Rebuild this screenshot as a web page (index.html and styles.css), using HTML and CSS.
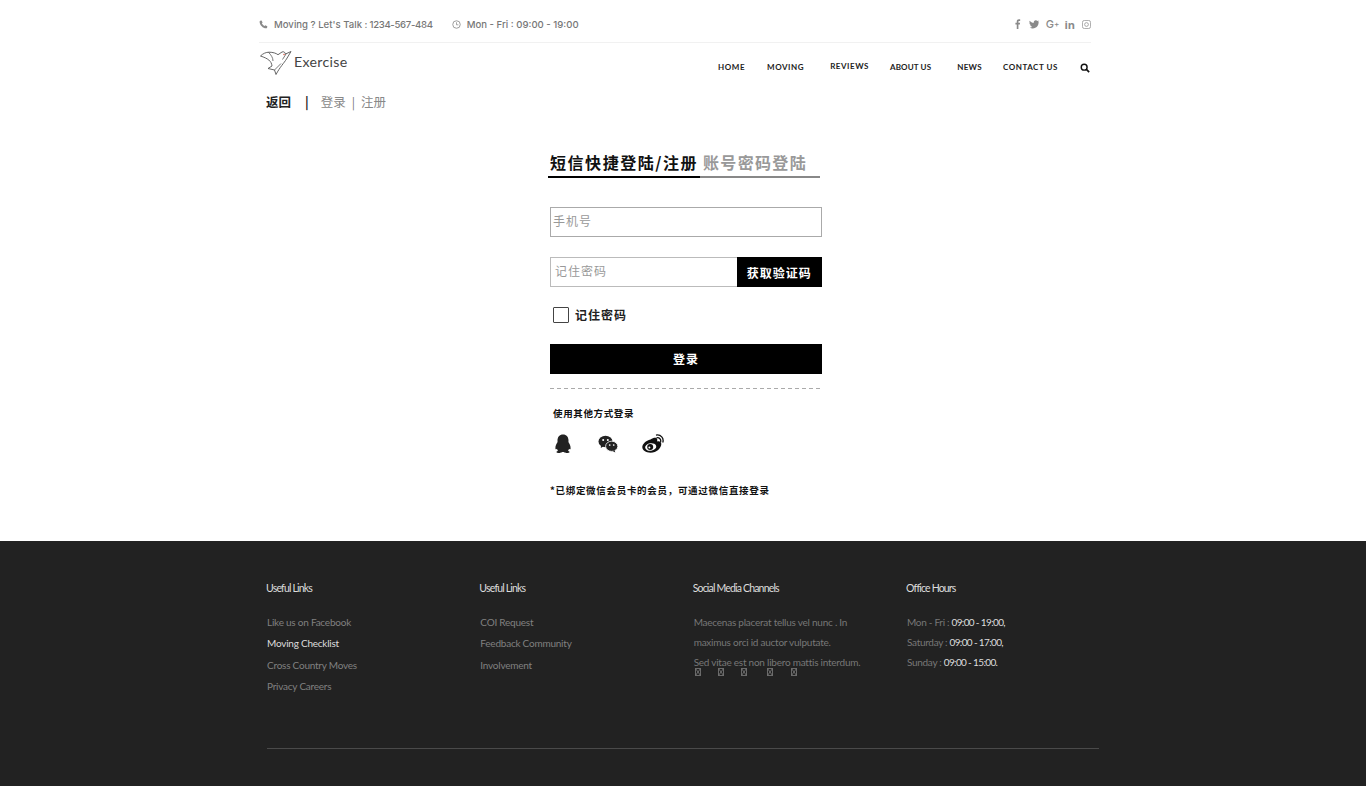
FILE: index.html
```html
<!DOCTYPE html>
<html lang="zh">
<head>
<meta charset="utf-8">
<title>Exercise</title>
<link rel="stylesheet" href="styles.css">
</head>
<body>
<header class="header">
  <div class="topbar">
    <div class="contact">
      <span class="contact-item">
        <svg class="ti" viewBox="0 0 12 12"><path d="M1.500 1 3.400.700l1.400 2.700-1 1c.6 1.500 2 3 3.600 3.600l1-1 2.700 1.400-.3 1.900c-.2.500-.7.7-1.300.7C5 10.700 1.300 7 .8 2.500c0-.7.200-1.300.7-1.500z" fill="#8a8a8a"/></svg>
        <span>Moving ? Let's Talk :</span><span class="phone">1234-567-484</span>
      </span>
      <span class="contact-item">
        <svg class="ti" viewBox="0 0 12 12"><circle cx="6" cy="6" r="5" fill="none" stroke="#8a8a8a" stroke-width="1.100"/><path d="M6 3V6.400H8.500" fill="none" stroke="#8a8a8a" stroke-width="1"/></svg>
        <span>Mon - Fri : 09:00 - 19:00</span>
      </span>
    </div>
    <div class="social">
      <svg class="si si-f" viewBox="0 0 7 12"><path d="M2 12V6.600H.4V4.500H2V3C2 1.200 3 .3 4.600.3c.7 0 1.300.1 1.500.1v1.900H5c-.8 0-1 .4-1 1v1.200h2l-.3 2.100H4V12z" fill="#8a8a8a"/></svg>
      <svg class="si si-t" viewBox="0 0 12 10"><path d="M12 1.300c-.4.200-.9.300-1.400.4.500-.3.900-.8 1.100-1.400-.5.300-1 .5-1.600.6C9.600.4 9 0 8.200 0 6.600 0 5.400 1.500 5.800 3 3.700 2.900 1.900 1.900.8.400.2 1.500.500 2.900 1.600 3.600c-.4 0-.8-.1-1.100-.3 0 1.200.8 2.200 2 2.500-.4.100-.8.100-1.100 0 .3 1 1.200 1.700 2.300 1.700C3.600 8.300 2.200 8.800.8 8.600 1.900 9.300 3.200 9.700 4.500 9.700c4.600 0 7.200-3.900 7-7.400.2-.3.500-.6.500-1z" fill="#8a8a8a"/></svg>
      <span class="gplus">G<span class="plus">+</span></span>
      <span class="linkedin">in</span>
      <svg class="si si-i" viewBox="0 0 10 10"><rect x=".5" y=".5" width="9" height="9" rx="2.200" fill="none" stroke="#8a8a8a" stroke-width=".8"/><circle cx="5" cy="5" r="2.100" fill="none" stroke="#8a8a8a" stroke-width=".8"/></svg>
    </div>
  </div>
  <div class="navrow">
    <a class="logo">
      <svg class="logo-mark" viewBox="0 0 32 26">
        <path d="M.5 6C3 3.500 6 2.200 9 2.200c4 0 7 1 9 2.500L22 2c2-.8 3 .5 3.500 2L31 1.500 26.500 9C24 13 20 17 16 24.500L14.500 20 8 18.500 12 16C11.500 11 8 8.500.5 6z" fill="none" stroke="#555" stroke-width=".9"/>
        <path d="M8.500 2.300C11 5 13 7.500 13 11M14.500 20 21 13.500M26 4 22.500 9.500" fill="none" stroke="#555" stroke-width=".8"/>
        <circle cx="24" cy="4.500" r=".8" fill="#e0604c"/>
      </svg>
      <span class="logo-text">Exercise</span>
    </a>
    <nav class="nav">
      <a class="nav-link n1">HOME</a>
      <a class="nav-link n2">MOVING</a>
      <a class="nav-link n3 raised">REVIEWS</a>
      <a class="nav-link n4">ABOUT US</a>
      <a class="nav-link n5">NEWS</a>
      <a class="nav-link n6">CONTACT US</a>
      <svg class="search" viewBox="0 0 12 12"><circle cx="5" cy="5" r="3.500" fill="none" stroke="#111" stroke-width="1.700"/><path d="M7.700 7.700 11 11" stroke="#111" stroke-width="2"/></svg>
    </nav>
  </div>
  <div class="crumbs">
    <a class="back">返回</a>
    <span class="sep">|</span>
    <a class="crumb">登录</a>
    <span class="crumb-sep">|</span>
    <a class="crumb">注册</a>
  </div>
</header>

<main class="login">
  <div class="tabs">
    <a class="tab active">短信快捷登陆/注册</a>
    <a class="tab">账号密码登陆</a>
  </div>
  <div class="field">手机号</div>
  <div class="code-row">
    <div class="field code-field">记住密码</div>
    <a class="code-btn">获取验证码</a>
  </div>
  <label class="remember"><span class="box"></span>记住密码</label>
  <a class="submit">登录</a>
  <div class="dashed"></div>
  <p class="other">使用其他方式登录</p>
  <div class="providers">
    <svg class="provider" viewBox="0 0 20 20"><path d="M10 .500c3.500 0 5.500 2.600 5.500 6 0 .7 0 1.200-.1 1.500.9 1.300 2.400 3.900 2.200 6.400-.1 1-.5 1.300-1.600.3-.2.900-.6 1.600-1 2.100 1.300.5 1.700 1 1.500 1.500-.2.600-2 .8-3.500.6-1.200-.2-1.800-.6-2.300-.8h-1.400c-.5.200-1.100.6-2.300.8-1.500.2-3.300 0-3.500-.6-.2-.5.200-1 1.500-1.500-.4-.5-.8-1.200-1-2.100-1.100 1-1.500.7-1.600-.3-.2-2.500 1.300-5.100 2.200-6.400-.1-.3-.1-.8-.1-1.500 0-3.400 2-6 5.500-6z" fill="#222"/></svg>
    <svg class="provider" viewBox="0 0 20 20"><ellipse cx="7.500" cy="7.500" rx="7" ry="5.800" fill="#222"/><path d="M3 11 2.800 14 6 12z" fill="#222"/><circle cx="5.200" cy="6" r="1" fill="#fff"/><circle cx="9.800" cy="6" r="1" fill="#fff"/><ellipse cx="13.700" cy="12.300" rx="6.100" ry="5.100" fill="#222" stroke="#fff" stroke-width=".8"/><path d="M16.500 16 17.300 18.500 14.500 17z" fill="#222"/><circle cx="11.700" cy="11" r=".85" fill="#fff"/><circle cx="15.700" cy="11" r=".85" fill="#fff"/></svg>
    <svg class="provider weibo" viewBox="0 0 22 20"><path d="M8.500 5.500c3.500-2.300 6.500-2.300 6.800.2 0 .7-.2 1.200-.3 1.700 2.400-.6 4.300.3 4.300 2.500 0 4-4.700 8.800-10.700 8.800C3.800 18.700.3 16.400.3 13 .3 10.300 4 6.300 8.500 5.500z" fill="#111"/><ellipse cx="8.700" cy="13" rx="5.600" ry="3.700" fill="#fff" transform="rotate(-8 8.700 13)"/><circle cx="8.200" cy="13.100" r="3" fill="#111"/><circle cx="7.400" cy="13.500" r="1" fill="#fff"/><path d="M14.500 3.800c2.800-.7 5 1.900 4 4.400M14 1.100c4.800-1 8.300 3.300 6.700 7.500" fill="none" stroke="#111" stroke-width="1.300"/></svg>
  </div>
  <p class="note">*已绑定微信会员卡的会员，可通过微信直接登录</p>
</main>

<footer class="footer">
  <div class="columns">
    <section class="col">
      <h4 class="col-title">Useful Links</h4>
      <ul class="links">
        <li>Like us on Facebook</li>
        <li class="on">Moving Checklist</li>
        <li>Cross Country Moves</li>
        <li>Privacy Careers</li>
      </ul>
    </section>
    <section class="col">
      <h4 class="col-title">Useful Links</h4>
      <ul class="links">
        <li>COI Request</li>
        <li>Feedback Community</li>
        <li>Involvement</li>
      </ul>
    </section>
    <section class="col">
      <h4 class="col-title">Social Media Channels</h4>
      <p class="copy">Maecenas placerat tellus vel nunc . In<br>maximus orci id auctor vulputate.</p>
      <p class="copy">Sed vitae est non libero mattis interdum.</p>
      <div class="tofus">
        <svg class="tofu t1" viewBox="0 0 6 8"><path d="M.5.500h5v7h-5zM.5.500l5 7M5.500.500l-5 7" fill="none" stroke="#8a8a8a" stroke-width=".7"/></svg>
        <svg class="tofu t2" viewBox="0 0 6 8"><path d="M.5.500h5v7h-5zM.5.500l5 7M5.500.500l-5 7" fill="none" stroke="#8a8a8a" stroke-width=".7"/></svg>
        <svg class="tofu t3" viewBox="0 0 6 8"><path d="M.5.500h5v7h-5zM.5.500l5 7M5.500.500l-5 7" fill="none" stroke="#8a8a8a" stroke-width=".7"/></svg>
        <svg class="tofu t4" viewBox="0 0 6 8"><path d="M.5.500h5v7h-5zM.5.500l5 7M5.500.500l-5 7" fill="none" stroke="#8a8a8a" stroke-width=".7"/></svg>
        <svg class="tofu" viewBox="0 0 6 8"><path d="M.5.500h5v7h-5zM.5.500l5 7M5.500.500l-5 7" fill="none" stroke="#8a8a8a" stroke-width=".7"/></svg>
      </div>
    </section>
    <section class="col">
      <h4 class="col-title">Office Hours</h4>
      <p class="hours">Mon - Fri : <b>09:00 - 19:00,</b></p>
      <p class="hours">Saturday : <b>09:00 - 17:00,</b></p>
      <p class="hours">Sunday : <b>09:00 - 15:00.</b></p>
    </section>
  </div>
  <div class="rule"></div>
</footer>
</body>
</html>
```
FILE: styles.css
```css
* { box-sizing: border-box; }
html, body { margin: 0; padding: 0; }
body {
  height: 786px;
  overflow: hidden;
  background: #fff;
  font-family: "Noto Sans CJK SC", sans-serif;
  color: #000;
}
p, ul, h4 { margin: 0; padding: 0; }
ul { list-style: none; }

.header { height: 137px; }

.topbar {
  margin-left: 259px;
  width: 832px;
  height: 43px;
  border-bottom: 1px solid #f1f1f1;
  display: flex;
  justify-content: space-between;
  align-items: center;
  padding-top: 6px;
  font-family: "Inter", "Liberation Sans", sans-serif;
  font-size: 9.600px;
  font-weight: 500;
  color: #777;
}
.contact { display: flex; gap: 19px; }
.contact-item { display: flex; align-items: center; white-space: nowrap; }
.phone { margin-left: 2px; letter-spacing: -.33px; }
.ti { width: 9px; height: 9px; margin-right: 6px; }
.social { display: flex; align-items: center; gap: 7px; color: #8a8a8a; }
.si { display: block; }
.si-f { width: 6px; height: 10px; margin-right: 1px; }
.si-t { width: 10px; height: 9px; }
.si-i { width: 9px; height: 9px; }
.gplus { font-size: 11px; font-weight: 500; margin-right: -2px; }
.plus { font-size: 8px; vertical-align: 1px; }
.linkedin { font-size: 11px; font-weight: 700; font-family: "Open Sans", sans-serif; }

.navrow {
  margin-left: 260px;
  width: 830px;
  height: 44px;
  display: flex;
  justify-content: space-between;
}
.logo { display: flex; align-items: flex-start; padding-top: 7px; }
.logo-mark { width: 32px; height: 26px; }
.logo-text {
  font-family: "Lato", sans-serif;
  font-size: 14.200px;
  color: #444;
  letter-spacing: .3px;
  margin-left: 2px;
  margin-top: 3px;
}
.nav {
  display: flex;
  align-items: flex-start;
  padding-top: 18px;
  font-family: "Lato", sans-serif;
  font-size: 8px;
  font-weight: 700;
  letter-spacing: .55px;
  color: #222;
}
.nav-link { white-space: nowrap; line-height: 12px; }
.raised { margin-top: -1px; }
.n1 { margin-right: 22px; }
.n2 { margin-right: 26px; }
.n3 { margin-right: 21px; }
.n4 { margin-right: 26px; letter-spacing: .15px; }
.n5 { margin-right: 21px; letter-spacing: .3px; }
.n6 { margin-right: 22px; }
.search { width: 10px; height: 10px; margin-top: 2px; }

.crumbs {
  margin-left: 266px;
  display: flex;
  align-items: center;
  height: 30px;
  font-size: 12.500px;
  line-height: 30px;
}
.back { font-weight: 700; color: #222; }
.sep { margin-left: 14px; margin-right: 12px; font-weight: 700; color: #222; }
.crumb { color: #888; }
.crumb-sep { color: #777; margin: 0 6px; font-size: 12px; }

.login {
  margin-left: 548px;
  width: 274px;
  height: 404px;
  padding-top: 13px;
}
.tabs { display: flex; width: 272px; height: 28px; }
.tab {
  font-size: 16px;
  font-weight: 700;
  color: #999;
  letter-spacing: 1.330px;
  line-height: 25px;
  white-space: nowrap;
  border-bottom: 2px solid #888;
  height: 28px;
  padding-left: 3px;
  width: 120px;
}
.tab.active {
  color: #111;
  width: 152px;
  padding-left: 2px;
  letter-spacing: 1.550px;
  border-bottom-color: #000;
}
.field {
  margin: 29px 0 0 2px;
  width: 272px;
  height: 30px;
  border: 1px solid #aaa;
  font-size: 12px;
  letter-spacing: 1px;
  line-height: 26px;
  color: #999;
  padding-left: 2px;
}
.code-row { display: flex; margin: 20px 0 0 2px; }
.code-field {
  margin: 0;
  width: 186.500px;
  padding-left: 4px;
  border-color: #bbb;
  border-right: 0;
}
.code-btn {
  width: 85.500px;
  height: 30px;
  background: #000;
  color: #fff;
  font-size: 12px;
  letter-spacing: 1px;
  font-weight: 700;
  line-height: 31px;
  text-align: center;
}
.remember {
  display: flex;
  align-items: flex-start;
  margin: 20px 0 0 5px;
  height: 16px;
  font-size: 12px;
  letter-spacing: 1px;
  line-height: 16px;
  font-weight: 700;
  color: #222;
}
.box {
  width: 16px;
  height: 16px;
  border: 1.500px solid #444;
  border-radius: 1px;
  margin-right: 6px;
}
.submit {
  display: block;
  margin: 21px 0 0 2px;
  width: 272px;
  height: 30px;
  background: #000;
  color: #fff;
  font-size: 12px;
  letter-spacing: 1px;
  font-weight: 700;
  line-height: 30px;
  text-align: center;
}
.dashed {
  margin: 14px 0 0 2px;
  width: 272px;
  height: 1px;
  background: repeating-linear-gradient(90deg, #aaa 0 4px, transparent 4px 7px);
}
.other {
  margin: 17px 0 0 5px;
  font-size: 9.500px;
  font-weight: 700;
  letter-spacing: .63px;
  line-height: 14px;
  color: #111;
}
.providers {
  display: flex;
  margin: 14px 0 0 5px;
  gap: 25px;
}
.provider { width: 20px; height: 20px; }
.weibo { width: 22px; margin-left: -1px; }
.note {
  margin: 29px 0 0 2px;
  font-size: 9.500px;
  font-weight: 700;
  letter-spacing: .7px;
  line-height: 14px;
  color: #111;
  white-space: nowrap;
}

.footer {
  height: 245px;
  background: #222;
  padding: 38px 0 0 266px;
  font-family: "Lato", sans-serif;
  font-size: 10px;
}
.columns { display: flex; height: 169px; }
.col { width: 213.330px; padding-left: 1px; }
.col-title {
  margin-left: -1px;
  font-size: 10.500px;
  font-weight: 400;
  letter-spacing: -.82px;
  line-height: 18px;
  color: #ddd;
  margin-bottom: 15px;
}
.links li {
  line-height: 21.400px;
  letter-spacing: -.23px;
  color: #808080;
}
.links .on { color: #ddd; }
.copy {
  white-space: nowrap;
  line-height: 20px;
  letter-spacing: -.24px;
  color: #777;
}
.tofus { display: flex; margin: -4px 0 0 1px; }
.tofu { width: 6px; height: 8px; display: block; }
.t1 { margin-right: 17.500px; }
.t2 { margin-right: 16.500px; }
.t3 { margin-right: 20.500px; }
.t4 { margin-right: 18px; }
.hours {
  line-height: 20px;
  letter-spacing: -.3px;
  color: #777;
  height: 20px;
}
.hours b { font-weight: 400; color: #ddd; letter-spacing: -.65px; }
.rule {
  margin-left: 1px;
  width: 832px;
  height: 1px;
  background: #4a4a4a;
}
```
